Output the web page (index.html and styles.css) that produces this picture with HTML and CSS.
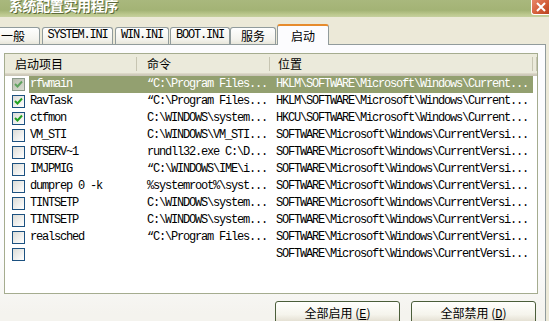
FILE: index.html
```html
<!DOCTYPE html>
<html lang="zh-CN">
<head>
    <meta charset="UTF-8">
    <title>系统配置实用程序</title>
    <link rel="stylesheet" href="styles.css">
</head>
<body>
<div class="window">
    <div class="titlebar">
        <span class="title">系统配置实用程序</span>
        <span class="close">
            <svg width="16" height="14" viewBox="0 0 16 14"><path d="M4 3 L12 11 M12 3 L4 11" stroke="#fff" stroke-width="2" fill="none"/></svg>
        </span>
    </div>

    <div class="tabs">
        <div class="tab first">一般</div>
        <div class="tab mono t-sys">SYSTEM.INI</div>
        <div class="tab mono t-win">WIN.INI</div>
        <div class="tab mono t-boot">BOOT.INI</div>
        <div class="tab t-svc">服务</div>
        <div class="tab active">启动</div>
    </div>

    <div class="panel">
        <div class="list">
            <div class="list-head">
                <div class="col c1">启动项目</div>
                <div class="col c2">命令</div>
                <div class="col c3">位置</div>
                <div class="col c4"></div>
            </div>

            <div class="row selected">
                <span class="cb-cell"><span class="cb dim on"></span></span>
                <span class="cell name">rfwmain</span>
                <span class="cell cmd">“C:\Program Files...</span>
                <span class="cell loc">HKLM\SOFTWARE\Microsoft\Windows\Current...</span>
            </div>
            <div class="row">
                <span class="cb-cell"><span class="cb on"></span></span>
                <span class="cell name">RavTask</span>
                <span class="cell cmd">“C:\Program Files...</span>
                <span class="cell loc">HKLM\SOFTWARE\Microsoft\Windows\Current...</span>
            </div>
            <div class="row">
                <span class="cb-cell"><span class="cb on"></span></span>
                <span class="cell name">ctfmon</span>
                <span class="cell cmd">C:\WINDOWS\system...</span>
                <span class="cell loc">HKCU\SOFTWARE\Microsoft\Windows\Current...</span>
            </div>
            <div class="row">
                <span class="cb-cell"><span class="cb"></span></span>
                <span class="cell name">VM_STI</span>
                <span class="cell cmd">C:\WINDOWS\VM_STI...</span>
                <span class="cell loc">SOFTWARE\Microsoft\Windows\CurrentVersi...</span>
            </div>
            <div class="row">
                <span class="cb-cell"><span class="cb"></span></span>
                <span class="cell name">DTSERV~1</span>
                <span class="cell cmd">rundll32.exe C:\D...</span>
                <span class="cell loc">SOFTWARE\Microsoft\Windows\CurrentVersi...</span>
            </div>
            <div class="row">
                <span class="cb-cell"><span class="cb"></span></span>
                <span class="cell name">IMJPMIG</span>
                <span class="cell cmd">“C:\WINDOWS\IME\i...</span>
                <span class="cell loc">SOFTWARE\Microsoft\Windows\CurrentVersi...</span>
            </div>
            <div class="row">
                <span class="cb-cell"><span class="cb"></span></span>
                <span class="cell name">dumprep 0 -k</span>
                <span class="cell cmd">%systemroot%\syst...</span>
                <span class="cell loc">SOFTWARE\Microsoft\Windows\CurrentVersi...</span>
            </div>
            <div class="row">
                <span class="cb-cell"><span class="cb"></span></span>
                <span class="cell name">TINTSETP</span>
                <span class="cell cmd">C:\WINDOWS\system...</span>
                <span class="cell loc">SOFTWARE\Microsoft\Windows\CurrentVersi...</span>
            </div>
            <div class="row">
                <span class="cb-cell"><span class="cb"></span></span>
                <span class="cell name">TINTSETP</span>
                <span class="cell cmd">C:\WINDOWS\system...</span>
                <span class="cell loc">SOFTWARE\Microsoft\Windows\CurrentVersi...</span>
            </div>
            <div class="row">
                <span class="cb-cell"><span class="cb"></span></span>
                <span class="cell name">realsched</span>
                <span class="cell cmd">“C:\Program Files...</span>
                <span class="cell loc">SOFTWARE\Microsoft\Windows\CurrentVersi...</span>
            </div>
            <div class="row">
                <span class="cb-cell"><span class="cb"></span></span>
                <span class="cell name"></span>
                <span class="cell cmd"></span>
                <span class="cell loc">SOFTWARE\Microsoft\Windows\CurrentVersi...</span>
            </div>
        </div>

        <div class="buttons">
            <button class="btn">全部启用 (<u>E</u>)</button>
            <button class="btn">全部禁用 (<u>D</u>)</button>
        </div>
    </div>
</div>
</body>
</html>
```

FILE: styles.css
```css
body {
    margin: 0;
    background: #ece9d8;
    font-family: "Noto Sans CJK SC", sans-serif;
    font-size: 12px;
    color: #000;
}
.window {
    width: 549px;
    height: 321px;
    overflow: hidden;
    background: #ece9d8;
}

/* title bar */
.titlebar {
    height: 17px;
    display: flex;
    align-items: flex-start;
    overflow: hidden;
    background: linear-gradient(#a9b87d, #a3b375 60%, #bcc88e 85%, #c6d09f);
}
.title {
    margin: -2px 0 0 9px;
    font-size: 14px;
    line-height: 14px;
    font-weight: bold;
    letter-spacing: -0.4px;
    color: #fff;
    text-shadow: 1px 1px 0 #5d6b3a;
}
.close {
    margin-left: auto;
    width: 17px;
    height: 14px;
    display: flex;
    justify-content: center;
    background: linear-gradient(135deg, #e9876a, #d15a35 60%, #b8421f);
    border-left: 1px solid #fff;
    border-bottom: 1px solid #fff;
    border-bottom-left-radius: 3px;
}

/* tabs */
.tabs {
    display: flex;
    align-items: flex-end;
    height: 20px;
    margin-top: 7px;
}
.tab {
    box-sizing: border-box;
    height: 17px;
    line-height: 15px;
    text-align: center;
    border: 1px solid #919b9c;
    border-bottom: none;
    border-radius: 3px 3px 0 0;
    background: linear-gradient(#fefefe, #f4f3ee 70%, #e8e6da);
    margin-right: 2px;
}
.mono {
    font-family: "Liberation Mono", monospace;
    letter-spacing: -1.2px;
}
.tab.first {
    width: 50px;
    margin-left: -10px;
    padding-left: 10px;
    text-align: left;
}
.t-sys { width: 71px; }
.t-win { width: 54px; margin-right: 1px; }
.t-boot { width: 60px; margin-right: 0; }
.t-svc { width: 46px; margin-right: 1px; }
.tab.active {
    position: relative;
    z-index: 1;
    width: 52px;
    height: 21px;
    margin-bottom: -1px;
    line-height: 19px;
    background: #fcfcfe;
    border-top: 2px solid #e68b2c;
}

/* panel */
.panel {
    box-sizing: border-box;
    width: 550px;
    height: 300px;
    margin-left: -4px;
    padding: 8px 7px 0 7px;
    border: 1px solid #919b9c;
    background: linear-gradient(#fcfcfe 70%, #f4f3ee 90%);
}

/* list view */
.list {
    box-sizing: border-box;
    height: 241px;
    border: 1px solid #a5ac8f;
    background: #fff;
    overflow: hidden;
}
.list-head {
    display: flex;
    height: 22px;
    background: linear-gradient(#ebeadb 0, #ebeadb 19px, #e2decd 19px, #d6d2c2 20px, #cbc7b8 21px);
}
.col {
    box-sizing: border-box;
    height: 19px;
    line-height: 19px;
    background-image: linear-gradient(#c7c5b2, #c7c5b2);
    background-size: 1px 14px;
    background-position: right center;
    background-repeat: no-repeat;
}
.c1 { width: 132px; padding-left: 10px; }
.c2 { width: 133px; padding-left: 10px; }
.c3 { width: 263px; padding-left: 8px; }
.c4 { flex: 1; }

.row {
    display: grid;
    grid-template-columns: 24px 108px 133px 263px;
    height: 17px;
    line-height: 17px;
    font-family: "Liberation Mono", monospace;
    letter-spacing: -1.2px;
}
.cell {
    white-space: nowrap;
    overflow: hidden;
}
.name { padding-left: 1px; }
.cmd { padding-left: 10px; }
.loc { padding-left: 6px; }
.row.selected .cell {
    background: #93a070;
    color: #fff;
}
.cb-cell {
    display: flex;
    align-items: center;
    padding-left: 7px;
}
.cb {
    box-sizing: border-box;
    width: 13px;
    height: 13px;
    border: 1px solid #1c5180;
    background: linear-gradient(135deg, #dcdcd7, #fff);
}
.cb.on {
    background-image: url("data:image/svg+xml,%3Csvg xmlns='http://www.w3.org/2000/svg' width='11' height='11'%3E%3Cpath d='M2 5 L4.5 7.5 L9 2.5' stroke='%2321a121' stroke-width='2' fill='none'/%3E%3C/svg%3E"), linear-gradient(135deg, #dcdcd7, #fff);
}
.cb.dim {
    border-color: #8c9a8c;
    background-color: #c9cdc0;
    background-image: url("data:image/svg+xml,%3Csvg xmlns='http://www.w3.org/2000/svg' width='11' height='11'%3E%3Cpath d='M2 5 L4.5 7.5 L9 2.5' stroke='%235fa35f' stroke-width='2' fill='none'/%3E%3C/svg%3E"), linear-gradient(135deg, #b9beb0, #d9dcd2);
}

/* buttons */
.buttons {
    display: flex;
    justify-content: flex-end;
    gap: 11px;
    margin-top: 7px;
    padding-right: 2px;
}
.btn {
    width: 125px;
    height: 23px;
    padding: 0;
    font-family: "Noto Sans CJK SC", sans-serif;
    font-size: 12px;
    color: #000;
    border: 1px solid #4b5e3a;
    border-radius: 3px;
    background: linear-gradient(#fffffd, #f5f4ec 60%, #e5e1d4 90%, #d6d0c5);
}
.btn u {
    font-family: "Liberation Mono", monospace;
}
```
